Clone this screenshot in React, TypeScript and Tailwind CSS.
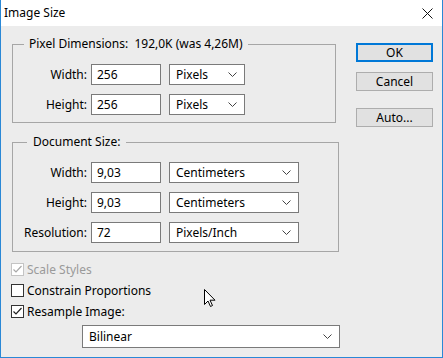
const font = { fontFamily: '"Segoe UI", "Noto Sans", sans-serif' };

const Chevron = () => (
  <svg width="9" height="5" viewBox="0 0 9 5" className="shrink-0">
    <path d="M0.5 0.5 L4.5 4.5 L8.5 0.5" fill="none" stroke="#444" strokeWidth="1" />
  </svg>
);

const Select = ({ value, width }: { value: string; width: string }) => (
  <div
    className={`${width} h-[21px] flex items-center justify-between pl-[6px] pr-[7px] bg-white border border-[#7a7a7a] text-[12px] text-black`}
  >
    <span>{value}</span>
    <Chevron />
  </div>
);

const Row = ({
  label,
  value,
  unit,
  selectWidth,
}: {
  label: string;
  value: string;
  unit: string;
  selectWidth: string;
}) => (
  <div className="flex items-center">
    <div className="w-[74px] text-right text-[12px] text-black">{label}</div>
    <div className="ml-[4px] w-[70px] h-[21px] flex items-center pl-[5px] bg-white border border-[#7a7a7a] text-[12px] text-black">
      {value}
    </div>
    <div className="ml-[8px]">
      <Select value={unit} width={selectWidth} />
    </div>
  </div>
);

const Check = ({ checked, disabled, label }: { checked: boolean; disabled?: boolean; label: string }) => (
  <div className="flex items-center h-[13px]">
    <div
      className={`w-[13px] h-[13px] bg-white border flex items-center justify-center ${
        disabled ? 'border-[#c4c4c4]' : 'border-[#333]'
      }`}
    >
      {checked && (
        <svg width="11" height="11" viewBox="0 0 11 11">
          <path
            d="M1.5 5.5 L4 8 L9.5 2"
            fill="none"
            stroke={disabled ? '#a8a8a8' : '#222'}
            strokeWidth="1.2"
          />
        </svg>
      )}
    </div>
    <span className={`ml-[3px] text-[12px] ${disabled ? 'text-[#9a9a9a]' : 'text-black'}`}>{label}</span>
  </div>
);

const Button = ({ label, primary }: { label: string; primary?: boolean }) => (
  <div
    className={`w-[77px] h-[19px] flex items-center justify-center bg-[#e1e1e1] text-[12px] text-black ${
      primary ? 'border-2 border-[#0078d7]' : 'border border-[#adadad]'
    }`}
  >
    {label}
  </div>
);

export default function App() {
  return (
    <div
      style={font}
      className="relative w-[443px] h-[358px] bg-[#ececec] border-l border-r border-b border-[#2a88d6] flex flex-col overflow-hidden"
    >
      <div className="h-[26px] shrink-0 bg-white flex items-center justify-between pl-[3px] pr-[9px]">
        <span className="text-[12px] text-black">Image Size</span>
        <svg width="11" height="11" viewBox="0 0 11 11">
          <path d="M0.5 0.5 L10.5 10.5 M10.5 0.5 L0.5 10.5" stroke="#111" strokeWidth="1" />
        </svg>
      </div>

      <div className="flex pl-[11px]">
        <div className="flex flex-col">
          <fieldset className="mt-[10px] w-[324px] border border-[#a6a6a6] pt-[12px] pb-[7px] flex flex-col gap-[9px]">
            <legend className="ml-[11px] px-[5px] h-[16px] leading-[16px] text-[12px] text-black">
              Pixel Dimensions:&nbsp;&nbsp;192,0K (was 4,26M)
            </legend>
            <Row label="Width:" value="256" unit="Pixels" selectWidth="w-[76px]" />
            <Row label="Height:" value="256" unit="Pixels" selectWidth="w-[76px]" />
          </fieldset>

          <fieldset className="mt-[11px] w-[327px] border border-[#a6a6a6] pt-[12px] pb-[8px] flex flex-col gap-[9px]">
            <legend className="ml-[14px] px-[6px] h-[16px] leading-[16px] text-[12px] text-black">
              Document Size:
            </legend>
            <Row label="Width:" value="9,03" unit="Centimeters" selectWidth="w-[130px]" />
            <Row label="Height:" value="9,03" unit="Centimeters" selectWidth="w-[130px]" />
            <Row label="Resolution:" value="72" unit="Pixels/Inch" selectWidth="w-[130px]" />
          </fieldset>

          <div className="mt-[11px] -ml-[1px] flex flex-col gap-[8px]">
            <Check checked disabled label="Scale Styles" />
            <Check checked={false} label="Constrain Proportions" />
            <Check checked label="Resample Image:" />
          </div>

          <div className="mt-[7px] ml-[70px]">
            <div className="w-[258px] h-[23px] flex items-center justify-between pl-[6px] pr-[7px] bg-white border border-[#7a7a7a] text-[12px] text-black">
              <span>Bilinear</span>
              <Chevron />
            </div>
          </div>
        </div>

        <div className="ml-[16px] mt-[17px] flex flex-col">
          <Button label="OK" primary />
          <div className="mt-[10px]">
            <Button label="Cancel" />
          </div>
          <div className="mt-[17px]">
            <Button label="Auto..." />
          </div>
        </div>
      </div>

      <svg
        className="absolute left-[203px] top-[289px]"
        width="12"
        height="19"
        viewBox="0 0 12 19"
      >
        <path
          d="M0.5 0.5 L0.5 15.5 L4 12 L6.5 17.5 L8.5 16.5 L6 11.2 L11 11.2 Z"
          fill="#fff"
          stroke="#000"
          strokeWidth="1"
          strokeLinejoin="miter"
        />
      </svg>
    </div>
  );
}
